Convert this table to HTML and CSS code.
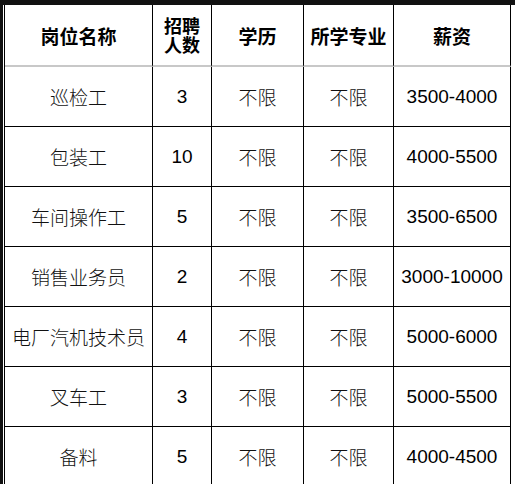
FILE: index.html
```html
<!DOCTYPE html>
<html lang="zh">
<head>
<meta charset="utf-8">
<title>招聘岗位</title>
<link rel="stylesheet" href="styles.css">
</head>
<body>
<div class="frame">
<table class="jobs">
  <colgroup>
    <col class="c1"><col class="c2"><col class="c3"><col class="c4"><col class="c5">
  </colgroup>
  <thead>
    <tr>
      <th>岗位名称</th>
      <th class="two"><span class="ln">招聘</span><span class="ln">人数</span></th>
      <th>学历</th>
      <th>所学专业</th>
      <th>薪资</th>
    </tr>
  </thead>
  <tbody>
    <tr><td>巡检工</td><td class="num">3</td><td>不限</td><td>不限</td><td class="num">3500-4000</td></tr>
    <tr><td>包装工</td><td class="num">10</td><td>不限</td><td>不限</td><td class="num">4000-5500</td></tr>
    <tr><td>车间操作工</td><td class="num">5</td><td>不限</td><td>不限</td><td class="num">3500-6500</td></tr>
    <tr><td>销售业务员</td><td class="num">2</td><td>不限</td><td>不限</td><td class="num">3000-10000</td></tr>
    <tr><td>电厂汽机技术员</td><td class="num">4</td><td>不限</td><td>不限</td><td class="num">5000-6000</td></tr>
    <tr><td>叉车工</td><td class="num">3</td><td>不限</td><td>不限</td><td class="num">5000-5500</td></tr>
    <tr><td>备料</td><td class="num">5</td><td>不限</td><td>不限</td><td class="num">4000-4500</td></tr>
  </tbody>
</table>
</div>
</body>
</html>
```
FILE: styles.css
```css
html, body {
  margin: 0;
  padding: 0;
  background: #fff;
}
body {
  width: 515px;
  height: 484px;
  overflow: hidden;
  font-family: "Noto Sans CJK SC", "Liberation Sans", sans-serif;
  color: #111;
}
.frame {
  border-top: 5px solid #111;
  border-left: 3px solid #111;
  padding-left: 1px;
}
.jobs {
  border-collapse: separate;
  border-spacing: 0;
  table-layout: fixed;
  width: 507px;
  border-left: 1px solid #000;
}
.c1 { width: 148px; }
.c2 { width: 59px; }
.c3 { width: 92px; }
.c4 { width: 90px; }
.c5 { width: 117px; }
.jobs th, .jobs td {
  padding: 0;
  text-align: center;
  vertical-align: middle;
  border-right: 1px solid #000;
  box-sizing: border-box;
}
.jobs th {
  height: 62px;
  padding-top: 2px;
  border-bottom: 2px solid #c8c8c8;
  font-size: 19px;
  font-weight: bold;
  line-height: 20px;
  color: #000;
}
.jobs th.two {
  font-size: 18px;
  padding-top: 0;
}
.ln {
  display: block;
  line-height: 19px;
  height: 19px;
}
.jobs td {
  height: 60px;
  border-bottom: 1px solid #000;
  font-size: 19px;
  font-weight: 300;
  line-height: 22px;
}
.jobs td.num {
  font-family: "Liberation Sans", Arial, sans-serif;
  font-size: 19px;
  font-weight: normal;
  color: #000;
}
```
